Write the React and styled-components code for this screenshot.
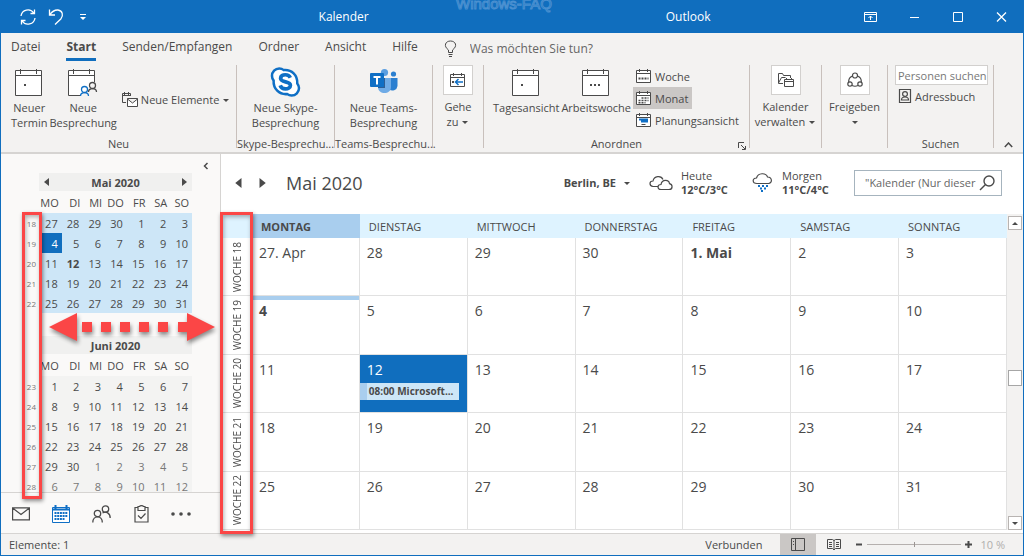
import React from 'react';
import styled, { createGlobalStyle, css } from 'styled-components';

const blue = '#106ebe';
const ink = '#4a4a4a';

const GlobalStyle = createGlobalStyle`
  * {
    box-sizing: border-box;
  }
  body {
    margin: 0;
    font-family: "Open Sans", "Noto Sans", sans-serif;
    font-size: 12px;
    line-height: 15px;
    color: ${ink};
  }
  button, input {
    font: inherit;
    color: inherit;
  }
  button {
    padding: 0;
    border: 0;
    background: none;
  }
  svg {
    display: block;
    flex: none;
  }
`;

const Window = styled.div`
  display: flex;
  flex-direction: column;
  height: 100vh;
  min-height: 556px;
  border: 1px solid ${blue};
  border-top: 0;
  background: #fff;
  overflow: hidden;
`;

/* ---------- title bar ---------- */

const TitleBar = styled.header`
  position: relative;
  display: grid;
  grid-template-columns: 1fr auto 1fr;
  align-items: center;
  height: 33px;
  padding: 0 13px 0 18px;
  background: ${blue};
  color: #fff;
  overflow: hidden;
`;

const QuickAccess = styled.div`
  display: flex;
  align-items: center;
  gap: 11px;
`;

const Titles = styled.div`
  display: flex;
  gap: 297px;
`;

const WindowButtons = styled.div`
  display: flex;
  justify-content: flex-end;
  gap: 20px;
`;

const Watermark = styled.div`
  position: absolute;
  left: 50%;
  top: -8px;
  margin-left: -56px;
  font-family: "Liberation Sans", sans-serif;
  font-size: 15px;
  line-height: 24px;
  color: ${blue};
  -webkit-text-stroke: 1px #4a90d0;
`;

/* ---------- ribbon ---------- */

const Tabs = styled.nav`
  display: flex;
  align-items: center;
  gap: 26px;
  height: 30px;
  padding: 0 10px;
  background: #f3f2f1;
`;

const Tab = styled.button`
  height: 26px;
  line-height: 22px;
  border-bottom: 3px solid transparent;
  ${(p) => p.$active && css`
    font-weight: 700;
    border-color: ${blue};
  `}
`;

const TellMe = styled.label`
  display: flex;
  align-items: center;
  gap: 12px;
  height: 26px;

  input {
    width: 150px;
    padding: 0;
    border: 0;
    background: none;
    outline: 0;
  }
  input::placeholder {
    color: #666;
    opacity: 1;
  }
`;

const Ribbon = styled.div`
  display: flex;
  height: 91px;
  padding: 2px 0 4px;
  background: #f3f2f1;
  border-bottom: 2px solid #d6d4d2;
  font-size: 11px;
`;

const Group = styled.section`
  display: flex;
  flex-direction: column;
  flex: 0 0 ${(p) => p.$width}px;
  min-width: 0;
  border-right: 1px solid #c8c0bc;
`;

const GroupBody = styled.div`
  display: flex;
  flex: 1;
  justify-content: ${(p) => p.$align || 'center'};
  padding-left: ${(p) => p.$pad || 0}px;
  gap: ${(p) => p.$gap || 0}px;
`;

const GroupLabel = styled.div`
  position: relative;
  height: 14px;
  line-height: 20px;
  text-align: center;
  white-space: nowrap;
`;

const Launcher = styled.button`
  position: absolute;
  right: 3px;
  bottom: -2px;
`;

const BigButton = styled.button`
  display: flex;
  flex-direction: column;
  align-items: center;
  padding-top: ${(p) => (p.$boxed ? 0 : 3)}px;
  white-space: nowrap;

  span {
    display: block;
    padding-top: 4px;
  }
`;

const IconBox = styled.i`
  display: grid;
  place-items: center;
  width: 30px;
  height: 30px;
  border: 1px solid #d2d0ce;
  background: #fff;
`;

const SmallButton = styled.button`
  display: flex;
  align-items: center;
  align-self: ${(p) => p.$self || 'flex-start'};
  gap: 3px;
  height: 22px;
  padding: 0 4px 0 3px;
  white-space: nowrap;
  background: ${(p) => (p.$active ? '#cac7c5' : 'none')};
`;

const Stack = styled.div`
  display: flex;
  flex-direction: column;
`;

const PeopleSearch = styled.input`
  width: 93px;
  height: 20px;
  padding: 0 0 0 2px;
  border: 1px solid #d2d0ce;
  background: #fff;
  outline: 0;
  &::placeholder {
    color: #777;
    opacity: 1;
  }
`;

const Collapse = styled.button`
  align-self: flex-end;
  margin: 0 auto;
`;

/* ---------- body ---------- */

const Body = styled.div`
  position: relative;
  display: flex;
  flex: 1;
  min-height: 0;
`;

const Sidebar = styled.aside`
  display: flex;
  flex-direction: column;
  flex: 0 0 219px;
  background: #faf9f8;
`;

const SidebarTop = styled.div`
  display: flex;
  justify-content: flex-end;
  height: 19px;
  padding: 4px 11px 0 0;
`;

const Months = styled.div`
  flex: 1;
  min-height: 0;
  overflow: hidden;
  padding-left: 23px;
`;

const Month = styled.table`
  width: 168px;
  margin-bottom: 23px;
  border-spacing: 0;
  table-layout: fixed;
  font-size: 11px;

  th, td {
    padding: 0 4px 0 0;
    text-align: right;
    font-weight: 400;
  }
  thead th {
    height: 22px;
    padding-right: 3px;
  }
  tbody tr {
    height: 20px;
  }
  tbody th {
    font-size: 8px;
    color: #777;
    padding-right: 4px;
  }
`;

const MonthTitle = styled.caption`
  height: 18px;
  margin-left: 15px;
  background: #f0f0ef;
  font-weight: 700;

  div {
    display: flex;
    align-items: center;
    justify-content: ${(p) => (p.$arrows ? 'space-between' : 'center')};
    height: 18px;
    padding: 0 4px;
  }
`;

const MiniDay = styled.td`
  background: ${(p) => (p.$today ? blue : p.$range ? '#cde6f7' : '#f3f3f2')};
  color: ${(p) => (p.$today ? '#fff' : p.$dim ? '#777' : ink)};
  && {
    font-weight: ${(p) => (p.$bold ? 700 : 400)};
  }
`;

const Modules = styled.nav`
  display: flex;
  align-items: center;
  gap: 20px;
  height: 41px;
  padding: 2px 10px 0;
  border-top: 1px solid #d6d4d2;
`;

const ModuleButton = styled.button`
  display: grid;
  place-items: center;
  width: 20px;
  height: 24px;
`;

const Main = styled.main`
  display: flex;
  flex-direction: column;
  flex: 1;
  min-width: 0;
  border-left: 1px solid #d6d4d2;
`;

const Heading = styled.div`
  display: flex;
  align-items: center;
  height: 60px;
  padding: 0 21px 3px 13px;
`;

const Arrows = styled.div`
  display: flex;
  gap: 13px;
`;

const MonthName = styled.h1`
  margin: 0 auto 0 19px;
  font-size: 18px;
  line-height: 24px;
  font-weight: 400;
`;

const Location = styled.button`
  display: flex;
  align-items: center;
  gap: 7px;
  margin-right: 18px;
  font-size: 11px;
  font-weight: 700;
`;

const Weather = styled.div`
  display: flex;
  align-items: center;
  gap: 8px;
  width: ${(p) => p.$width}px;
  font-size: 11px;
  line-height: 14px;
  white-space: nowrap;

  strong {
    display: block;
  }
`;

const Search = styled.label`
  display: flex;
  align-items: center;
  width: 148px;
  height: 26px;
  padding: 0 6px 0 10px;
  border: 1px solid #a6b4be;

  input {
    flex: 1;
    min-width: 0;
    padding: 0;
    border: 0;
    outline: 0;
    font-size: 11px;
  }
  input::placeholder {
    color: #666;
    opacity: 1;
  }
`;

const GridArea = styled.div`
  display: flex;
  flex: 1;
  min-height: 0;
  padding-bottom: 3px;
`;

const GridWrap = styled.div`
  flex: 1;
  min-width: 0;
`;

const Grid = styled.table`
  width: 100%;
  height: 100%;
  border-spacing: 0;
  table-layout: fixed;

  th, td {
    padding: 0;
    font-weight: 400;
    text-align: left;
  }
`;

const DayHead = styled.th`
  height: 24px;
  background: ${(p) => (p.$today ? '#a9ceee' : '#def3ff')};
  && {
    padding-left: 9px;
    font-size: 11px;
    font-weight: ${(p) => (p.$today ? 700 : 400)};
  }
`;

const WeekHead = styled.th`
  border-bottom: 1px solid #e1e1e1;

  span {
    display: block;
    margin: 0 auto;
    writing-mode: vertical-rl;
    transform: rotate(180deg);
    font-size: 10px;
    line-height: 16px;
    width: 16px;
    white-space: nowrap;
  }
`;

const Day = styled.td`
  vertical-align: top;
  border-right: 1px solid #e1e1e1;
  border-bottom: 1px solid #e1e1e1;
  font-size: 14px;
  line-height: 18px;
  ${(p) => p.$today && css`
    box-shadow: inset 0 4px #a9ceee;
  `}
  ${(p) => p.$selected && css`
    background: ${blue};
    color: #fff;
  `}
  && {
    font-weight: ${(p) => (p.$bold ? 700 : 400)};
  }
`;

const DayNumber = styled.div`
  padding: 6px 0 0 7px;
`;

const Event = styled.button`
  display: block;
  width: 99px;
  height: 17px;
  margin-top: 4px;
  padding-left: 2px;
  border-left: 7px solid #a9ceee;
  background: #cde6f7;
  color: ${ink};
  font-size: 10px;
  font-weight: 700;
  line-height: 15px;
  text-align: left;
  white-space: nowrap;
`;

const Scrollbar = styled.div`
  display: flex;
  flex-direction: column;
  width: 16px;
  padding: 2px 1px 0;
  background: #f3f2f1;
`;

const ScrollButton = styled.button`
  display: grid;
  place-items: center;
  height: 14px;
  border: 1px solid #b8b4b2;
  background: #fff;
`;

const Gap = styled.div`
  flex: ${(p) => p.$grow};
`;

const Thumb = styled.div`
  height: 16px;
  border: 1px solid #a6a6a6;
  background: #fff;
`;

/* ---------- highlights over the week numbers ---------- */

const Frame = styled.div`
  position: absolute;
  top: ${(p) => p.$top}px;
  bottom: ${(p) => p.$bottom}px;
  left: ${(p) => p.$left}px;
  width: ${(p) => p.$width}px;
  border: 3px solid #fb4646;
  box-shadow: 1px 2px 4px rgba(0, 0, 0, 0.45), inset 1px 2px 4px rgba(0, 0, 0, 0.3);
  pointer-events: none;
`;

const DoubleArrow = styled.svg`
  position: absolute;
  left: 47px;
  top: 157px;
  filter: drop-shadow(1px 3px 2px rgba(0, 0, 0, 0.45));
  pointer-events: none;
`;

/* ---------- status bar ---------- */

const Status = styled.footer`
  display: flex;
  align-items: center;
  height: 22px;
  padding: 0 18px 0 8px;
  background: #f3f2f1;
  border-top: 1px solid #d6d4d2;
  font-size: 11px;
`;

const Connected = styled.span`
  margin: 0 18px 0 auto;
`;

const ViewButton = styled.button`
  display: grid;
  place-items: center;
  width: 36px;
  height: 21px;
  background: ${(p) => (p.$active ? '#cac7c5' : 'none')};
`;

const Zoom = styled.div`
  display: flex;
  align-items: center;
  gap: 4px;
  margin: 0 8px 0 4px;

  input {
    appearance: none;
    width: 94px;
    height: 15px;
    margin: 0;
    background: linear-gradient(#b5b0ae, #b5b0ae) center / 100% 1px no-repeat;
  }
  input::-webkit-slider-thumb {
    appearance: none;
    width: 1px;
    height: 5px;
    background: #9a9492;
  }
`;

const Percent = styled.span`
  color: #b0aeac;
`;

/* ---------- icons ---------- */

const stroke = { fill: 'none', stroke: 'currentColor' };

const Triangle = ({ dir, size = 8 }) => {
  const d = {
    left: 'M6 0v8L1 4z',
    right: 'M2 0v8l5-4z',
    up: 'M1 6h6L4 3z',
    down: 'M1 3h6L4 6z',
  }[dir];
  return (
    <svg width={size} height={size} viewBox="0 0 8 8" fill="currentColor">
      <path d={d} />
    </svg>
  );
};

const CalendarIcon = ({ children }) => (
  <svg width="28" height="28" viewBox="0 0 28 28" {...stroke}>
    <path d="M.5 2.500h26v25h-26z" fill="#fff" />
    <path d="M.5 7.500h26M5.500 1v5M21.500 1v5" />
    {children}
  </svg>
);

const Dots = ({ xs, y }) => (
  <g stroke="none" fill={ink}>
    {xs.map((x) => <rect key={x} x={x} y={y} width="2" height="2" />)}
  </g>
);

const SmallCalendar = ({ children }) => (
  <svg width="16" height="16" viewBox="0 0 16 16" {...stroke}>
    <path d="M.5 2.500h14v12H.5z" fill="#fff" />
    <path d="M.5 5.500h14M3.500 1v3M11.500 1v3" />
    {children}
  </svg>
);

const SkypeIcon = () => (
  <svg width="31" height="28" viewBox="0 1 31 29" overflow="visible">
    <path
      d="M9 1.500c2 0 3.500.7 4.800 1.700C22 2.500 28 8.500 27.700 17c1 1.300 1.800 2.900 1.800 4.700 0 4.300-3.400 7.800-7.700 7.800-1.800 0-3.300-.6-4.600-1.500C9 28.700 2.700 22.500 3.200 14 2.200 12.600 1.500 11 1.500 9.200 1.500 5 4.800 1.500 9 1.500z"
      fill="#fff" stroke="#0f6fc5" strokeWidth="2.600"
    />
    <path
      d="M20.500 11c-1-2.200-3-3-5.200-3-2.600 0-4.900 1.200-4.900 3.600 0 5 10.200 2.500 10.200 7.300 0 2.400-2.400 3.700-5.100 3.700-2.600 0-4.700-1.100-5.500-3.600"
      fill="none" stroke="#0f6fc5" strokeWidth="3.800"
    />
  </svg>
);

const TeamsIcon = () => (
  <svg width="28" height="28" viewBox="0 0 28 28">
    <circle cx="23.500" cy="6" r="2.600" fill="#2b7fd0" />
    <circle cx="14.500" cy="4.500" r="3.600" fill="#5a9ee0" />
    <path d="M19 10h8.500v8a5 5 0 0 1-8.500 3z" fill="#2b7fd0" />
    <path d="M8 10h13v9c0 8-13 8-13 0z" fill="#6fabe6" />
    <path d="M8 10h7v10H8z" fill="#2d5f96" />
    <rect x="0" y="5" width="14" height="14" rx="1" fill="#0f6fc5" />
    <path d="M3.500 9h7M7 9v7.500" stroke="#fff" strokeWidth="2" />
  </svg>
);

const Person = ({ x, y, color }) => (
  <g transform={`translate(${x} ${y})`} stroke={color} strokeWidth="1.300">
    <circle cx="4.500" cy="3.500" r="3" />
    <path d="M.5 10c0-4.500 8-4.500 8 0" />
  </g>
);

/* ---------- data ---------- */

const weekdays = ['MO', 'DI', 'MI', 'DO', 'FR', 'SA', 'SO'];

const may = [
  [18, [27, 28, 29, 30, 1, 2, 3]],
  [19, [4, 5, 6, 7, 8, 9, 10]],
  [20, [11, 12, 13, 14, 15, 16, 17]],
  [21, [18, 19, 20, 21, 22, 23, 24]],
  [22, [25, 26, 27, 28, 29, 30, 31]],
];

const june = [
  [23, [1, 2, 3, 4, 5, 6, 7]],
  [24, [8, 9, 10, 11, 12, 13, 14]],
  [25, [15, 16, 17, 18, 19, 20, 21]],
  [26, [22, 23, 24, 25, 26, 27, 28]],
  [27, [29, 30, 1, 2, 3, 4, 5]],
  [28, [6, 7, 8, 9, 10, 11, 12]],
];

const days = ['MONTAG', 'DIENSTAG', 'MITTWOCH', 'DONNERSTAG', 'FREITAG', 'SAMSTAG', 'SONNTAG'];

const dayLabel = (week, day) => {
  if (week === 18 && day === 27) return '27. Apr';
  if (week === 18 && day === 1) return '1. Mai';
  return day;
};

/* ---------- parts ---------- */

const MiniMonth = ({ title, weeks, current }) => (
  <Month>
    <MonthTitle $arrows={current}>
      <div>
        {current && <button aria-label="Vorheriger Monat"><Triangle dir="left" /></button>}
        <span>{title}</span>
        {current && <button aria-label="Nächster Monat"><Triangle dir="right" /></button>}
      </div>
    </MonthTitle>
    <colgroup>
      <col style={{ width: 16 }} />
    </colgroup>
    <thead>
      <tr>
        <th />
        {weekdays.map((d) => <th key={d}>{d}</th>)}
      </tr>
    </thead>
    <tbody>
      {weeks.map(([week, list]) => (
        <tr key={week}>
          <th>{week}</th>
          {list.map((d) => (
            <MiniDay
              key={d}
              $range={current}
              $today={current && d === 4}
              $bold={current && d === 12}
              $dim={!current && ((week === 27 && d < 10) || week === 28)}
            >
              {d}
            </MiniDay>
          ))}
        </tr>
      ))}
    </tbody>
  </Month>
);

const TopBar = () => (
  <TitleBar>
    <Watermark>Windows-FAQ</Watermark>
    <QuickAccess>
      <button aria-label="Senden/Empfangen">
        <svg width="18" height="18" viewBox="0 0 18 18" {...stroke} strokeWidth="1.300">
          <path d="M2 8a7 7 0 0 1 12.800-3M16 10A7 7 0 0 1 3.200 13M15.500 1.500v4h-4M2.500 16.500v-4h4" />
        </svg>
      </button>
      <button aria-label="Rückgängig">
        <svg width="16" height="18" viewBox="0 0 16 18" {...stroke} strokeWidth="1.300">
          <path d="M1.500 1.500v5.500h5.500M1.800 6.800C4 3.500 7 1.800 10 2c4.500.6 5.800 5.500 2.800 9L7 16.500" />
        </svg>
      </button>
      <button aria-label="Anpassen">
        <svg width="18" height="8" viewBox="0 0 18 8" fill="currentColor">
          <path d="M5 1h6v1H5zM5 4h6L8 7z" />
        </svg>
      </button>
    </QuickAccess>
    <Titles>
      <span>Kalender</span>
      <span>Outlook</span>
    </Titles>
    <WindowButtons>
      <button aria-label="Menüband-Anzeigeoptionen">
        <svg width="24" height="12" viewBox="0 0 24 12" {...stroke}>
          <path d="M.5 1.500h12v9H.5zM.5 3.500h12M6.500 9V5M4.500 7l2-2 2 2" />
        </svg>
      </button>
      <button aria-label="Minimieren">
        <svg width="24" height="12" viewBox="0 0 24 12" {...stroke}><path d="M2 6.500h9" /></svg>
      </button>
      <button aria-label="Maximieren">
        <svg width="24" height="12" viewBox="0 0 24 12" {...stroke}><path d="M1.500 1.500h9v9h-9z" /></svg>
      </button>
      <button aria-label="Schließen">
        <svg width="14" height="12" viewBox="0 0 14 12" {...stroke} strokeWidth="1.300"><path d="M1 1.500l9 9M10 1.500l-9 9" /></svg>
      </button>
    </WindowButtons>
  </TitleBar>
);

const TabRow = () => (
  <Tabs>
    <Tab>Datei</Tab>
    <Tab $active>Start</Tab>
    <Tab>Senden/Empfangen</Tab>
    <Tab>Ordner</Tab>
    <Tab>Ansicht</Tab>
    <Tab>Hilfe</Tab>
    <TellMe>
      <svg width="14" height="17" viewBox="0 0 14 17" {...stroke}>
        <path d="M4.500 12.500v-2.500C-1 6 1.500 1 6.500 1s7.500 5 2 9v2.500zM4.500 14.500h4M5 16.500h3" />
      </svg>
      <input aria-label="Was möchten Sie tun?" placeholder="Was möchten Sie tun?" />
    </TellMe>
  </Tabs>
);

const ArrowSlot = styled.i`
  display: inline-block;
  svg {
    display: inline;
  }
`;

const InlineArrow = () => (
  <ArrowSlot><Triangle dir="down" /></ArrowSlot>
);

const RibbonBar = () => (
  <Ribbon>
    <Group $width={236}>
      <GroupBody $align="flex-start" $pad={10} $gap={2}>
        <BigButton>
          <CalendarIcon><Dots xs={[9]} y={16} /></CalendarIcon>
          <span>Neuer<br />Termin</span>
        </BigButton>
        <BigButton>
          <svg width="30" height="28" viewBox="0 0 30 28" {...stroke}>
            <path d="M12 27.500H.5v-25h26V14" fill="#fff" />
            <path d="M.5 7.500h26M5.500 1v5M21.500 1v5" />
            <Person x={20} y={14} color={ink} />
            <Person x={12} y={18} color="#0f6fc5" />
          </svg>
          <span>Neue<br />Besprechung</span>
        </BigButton>
        <SmallButton $self="center">
          <svg width="16" height="16" viewBox="0 0 16 16" {...stroke}>
            <path d="M4 10.500H.5v-9h8V4M.5 3.500h8M2.500 0v3M6.500 0v3" />
            <path d="M5.500 6.500h10v8h-10zM5.500 7l5 4 5-4" fill="#fff" />
          </svg>
          Neue Elemente
          <Triangle dir="down" />
        </SmallButton>
      </GroupBody>
      <GroupLabel>Neu</GroupLabel>
    </Group>
    <Group $width={98}>
      <GroupBody>
        <BigButton>
          <SkypeIcon />
          <span>Neue Skype-<br />Besprechung</span>
        </BigButton>
      </GroupBody>
      <GroupLabel>Skype-Besprechu...</GroupLabel>
    </Group>
    <Group $width={98}>
      <GroupBody>
        <BigButton>
          <TeamsIcon />
          <span>Neue Teams-<br />Besprechung</span>
        </BigButton>
      </GroupBody>
      <GroupLabel>Teams-Besprechu...</GroupLabel>
    </Group>
    <Group $width={51}>
      <GroupBody>
        <BigButton $boxed>
          <IconBox>
            <SmallCalendar>
              <path d="M13 10H5.500M8.500 7l-3 3 3 3" stroke="#0f6fc5" strokeWidth="1.500" />
              <Dots xs={[2]} y={9} />
            </SmallCalendar>
          </IconBox>
          <span>Gehe<br />zu <InlineArrow /></span>
        </BigButton>
      </GroupBody>
      <GroupLabel />
    </Group>
    <Group $width={266}>
      <GroupBody $align="flex-start" $pad={9} $gap={2}>
        <BigButton>
          <CalendarIcon><Dots xs={[9]} y={16} /></CalendarIcon>
          <span>Tagesansicht</span>
        </BigButton>
        <BigButton>
          <CalendarIcon><Dots xs={[8, 12, 16]} y={16} /></CalendarIcon>
          <span>Arbeitswoche</span>
        </BigButton>
        <Stack>
          <SmallButton>
            <SmallCalendar><path d="M2.500 10.500h10" strokeWidth="2" strokeDasharray="2 1" /></SmallCalendar>
            Woche
          </SmallButton>
          <SmallButton $active>
            <SmallCalendar>
              <path d="M5.500 8h7M2.500 10.500h10M2.500 12.800h7" strokeWidth="1.500" strokeDasharray="2 1" />
            </SmallCalendar>
            Monat
          </SmallButton>
          <SmallButton>
            <SmallCalendar>
              <path d="M3 7.500h9M5 9.500h7" stroke="#0f6fc5" strokeWidth="2" />
              <path d="M5.500 12.500h4" />
            </SmallCalendar>
            Planungsansicht
          </SmallButton>
        </Stack>
      </GroupBody>
      <GroupLabel>
        Anordnen
        <Launcher aria-label="Anordnen: Optionen">
          <svg width="8" height="8" viewBox="0 0 8 8" {...stroke}>
            <path d="M.5 6V.5H6M3 3l4 4M7.500 4v3.500H4" />
          </svg>
        </Launcher>
      </GroupLabel>
    </Group>
    <Group $width={72}>
      <GroupBody>
        <BigButton $boxed>
          <IconBox>
            <svg width="16" height="16" viewBox="0 0 16 16" {...stroke}>
              <path d="M5 11.500H.5V1.500h4l1 2h7V6M.5 11l3-5.500h4" />
              <path d="M6.500 7.500h9v7h-9zM6.500 9.500h9M8.500 6v2M13.500 6v2" fill="#fff" />
            </svg>
          </IconBox>
          <span>Kalender<br />verwalten <InlineArrow /></span>
        </BigButton>
      </GroupBody>
      <GroupLabel />
    </Group>
    <Group $width={66}>
      <GroupBody>
        <BigButton $boxed>
          <IconBox>
            <svg width="16" height="16" viewBox="0 0 16 16" {...stroke} strokeWidth="1.200">
              <circle cx="8" cy="3.500" r="2.500" />
              <circle cx="3" cy="12" r="2.200" />
              <circle cx="13" cy="12" r="2.200" />
              <path d="M5.500 4C3 5 1.500 7 1.700 10M10.500 4c2.500 1 4 3 3.800 6M5 13.500c2 1 4 1 6 0" />
            </svg>
          </IconBox>
          <span>Freigeben<br /><InlineArrow /></span>
        </BigButton>
      </GroupBody>
      <GroupLabel />
    </Group>
    <Group $width={106}>
      <GroupBody $align="flex-start" $pad={7}>
        <Stack>
          <PeopleSearch aria-label="Personen suchen" placeholder="Personen suchen" />
          <SmallButton>
            <svg width="14" height="16" viewBox="0 0 14 16" {...stroke} strokeWidth="1.200">
              <path d="M1.500 1.500h11v13h-11zM3.500 12c0-4 7-4 7 0zM1 4.500h1M1 11.500h1" />
              <circle cx="7" cy="6" r="2.400" />
            </svg>
            Adressbuch
          </SmallButton>
        </Stack>
      </GroupBody>
      <GroupLabel>Suchen</GroupLabel>
    </Group>
    <Collapse aria-label="Menüband reduzieren">
      <svg width="9" height="6" viewBox="0 0 9 6" {...stroke} strokeWidth="1.500"><path d="M.8 5l3.700-4 3.700 4" /></svg>
    </Collapse>
  </Ribbon>
);

const FolderPane = () => (
  <Sidebar>
    <SidebarTop>
      <button aria-label="Ordnerbereich reduzieren">
        <svg width="6" height="8" viewBox="0 0 6 8" {...stroke} strokeWidth="1.500"><path d="M4.500 1L1.500 4l3 3" /></svg>
      </button>
    </SidebarTop>
    <Months>
      <MiniMonth title="Mai 2020" weeks={may} current />
      <MiniMonth title="Juni 2020" weeks={june} />
    </Months>
    <Modules>
      <ModuleButton aria-label="E-Mail">
        <svg width="18" height="14" viewBox="0 0 18 14" {...stroke} strokeWidth="1.200">
          <path d="M.6.8h16.800v12H.6zM.6 1L9 7.500 17.400 1" />
        </svg>
      </ModuleButton>
      <ModuleButton aria-label="Kalender">
        <svg width="18" height="18" viewBox="0 0 18 18" fill="none" stroke="#0f6fc5">
          <path d="M.5 2.500h17v15H.5z" fill="#fff" />
          <path d="M.5 4.500h17M3.500 0v4M14.500 0v4" strokeWidth="2" />
          <path d="M2.500 8h13M2.500 11h13M2.500 14h10" strokeWidth="2" strokeDasharray="2 .7" />
        </svg>
      </ModuleButton>
      <ModuleButton aria-label="Personen">
        <svg width="19" height="18" viewBox="0 0 19 18" {...stroke} strokeWidth="1.300">
          <circle cx="5.500" cy="8.500" r="3.200" />
          <path d="M.8 17.500c0-7.500 9.500-7.500 9.500 0" />
          <circle cx="13.500" cy="4" r="3.200" />
          <path d="M10.500 8c3.500-2 7.700 0 7.700 5" />
        </svg>
      </ModuleButton>
      <ModuleButton aria-label="Aufgaben">
        <svg width="15" height="18" viewBox="0 0 15 18" {...stroke} strokeWidth="1.200">
          <path d="M4 2.500H1v14.500h13V2.500h-3M4 1.500h1.500C6 .3 9 .3 9.500 1.500H11v4H4zM4 10.500l3 3 4.500-5" />
        </svg>
      </ModuleButton>
      <ModuleButton aria-label="Weitere">
        <svg width="20" height="4" viewBox="0 0 20 4" fill={ink}>
          <circle cx="2" cy="2" r="1.800" /><circle cx="10" cy="2" r="1.800" /><circle cx="18" cy="2" r="1.800" />
        </svg>
      </ModuleButton>
    </Modules>
  </Sidebar>
);

const CalendarHeading = () => (
  <Heading>
    <Arrows>
      <button aria-label="Zurück"><Triangle dir="left" size={10} /></button>
      <button aria-label="Weiter"><Triangle dir="right" size={10} /></button>
    </Arrows>
    <MonthName>Mai 2020</MonthName>
    <Location>Berlin, BE <Triangle dir="down" /></Location>
    <Weather $width={103}>
      <svg width="24" height="16" viewBox="0 0 24 16" {...stroke} strokeWidth="1.200">
        <path d="M9 11.500H4C0 11 0 6 4 6 5 1 12 0 14 4.500" />
        <path d="M12 14.500c-4 0-4-5 0-5 1-5.500 8-5 8.500-.8 3.500.8 3.500 5.800-.5 5.800z" />
      </svg>
      <div>Heute<strong>12°C/3°C</strong></div>
    </Weather>
    <Weather $width={102}>
      <svg width="22" height="20" viewBox="0 0 22 20" {...stroke} strokeWidth="1.200">
        <path d="M5 10.500C0 10.500 0 5 4.500 5 6-.5 14-.5 15.500 4c5 0 5 6.500 1 6.500z" />
        <path d="M6 13h11M8 15.500h8M9 18h4" stroke="#0f6fc5" strokeWidth="2" strokeDasharray="2 2" />
      </svg>
      <div>Morgen<strong>11°C/4°C</strong></div>
    </Weather>
    <Search>
      <input aria-label="Suchen" placeholder={'"Kalender (Nur dieser'} />
      <svg width="16" height="16" viewBox="0 0 16 16" {...stroke} strokeWidth="1.400">
        <circle cx="10" cy="6" r="5" />
        <path d="M6.500 9.500L1 15" />
      </svg>
    </Search>
  </Heading>
);

const MonthGrid = () => (
  <Grid>
    <colgroup>
      <col style={{ width: 31 }} />
    </colgroup>
    <thead>
      <tr>
        <DayHead />
        {days.map((d, i) => <DayHead key={d} $today={i === 0}>{d}</DayHead>)}
      </tr>
    </thead>
    <tbody>
      {may.map(([week, list]) => (
        <tr key={week}>
          <WeekHead><span>WOCHE {week}</span></WeekHead>
          {list.map((d) => (
            <Day key={d} $today={d === 4} $selected={d === 12} $bold={d === 4 || d === 1}>
              <DayNumber>{dayLabel(week, d)}</DayNumber>
              {d === 12 && <Event>08:00 Microsoft...</Event>}
            </Day>
          ))}
        </tr>
      ))}
    </tbody>
  </Grid>
);

const Highlights = () => (
  <>
    <Frame $top={58} $bottom={34} $left={21} $width={20} />
    <Frame $top={58} $bottom={-1} $left={219} $width={33} />
    <DoubleArrow width="168" height="32" viewBox="0 0 168 32" fill="#fb4646">
      <path d="M1 16L29 2v28zM167 16L139 2v9h-9v10h9v9z" />
      <path d="M34 11h10v10H34zM53 11h10v10H53zM72 11h10v10H72zM91 11h10v10H91zM110 11h10v10h-10z" />
    </DoubleArrow>
  </>
);

const StatusBar = () => (
  <Status>
    Elemente: 1
    <Connected>Verbunden</Connected>
    <ViewButton $active aria-label="Normal">
      <svg width="14" height="13" viewBox="0 0 14 13" {...stroke}><path d="M.5.5h13v12H.5zM4.500.5v12M2 3.500h1M2 6.500h1" /></svg>
    </ViewButton>
    <ViewButton aria-label="Lesen">
      <svg width="14" height="13" viewBox="0 0 14 13" {...stroke}>
        <path d="M.5 1.500h5l1.500 1 1.500-1h5v9h-5L7 12l-1.500-1.500h-5zM7 2v10M2 4.500h3M2 6.500h3M2 8.500h3M9 4.500h3M9 6.500h3M9 8.500h3" />
      </svg>
    </ViewButton>
    <Zoom>
      <button aria-label="Verkleinern">
        <svg width="7" height="7" viewBox="0 0 7 7" {...stroke} strokeWidth="2"><path d="M0 3.500h6" /></svg>
      </button>
      <input type="range" aria-label="Zoom" defaultValue="50" />
      <button aria-label="Vergrößern">
        <svg width="7" height="7" viewBox="0 0 7 7" {...stroke} strokeWidth="2"><path d="M0 3.500h7M3.500 0v7" /></svg>
      </button>
    </Zoom>
    <Percent>10 %</Percent>
  </Status>
);

const App = () => {
  return (
    <Window>
      <GlobalStyle />
      <TopBar />
      <TabRow />
      <RibbonBar />
      <Body>
        <FolderPane />
        <Main>
          <CalendarHeading />
          <GridArea>
            <GridWrap>
              <MonthGrid />
            </GridWrap>
            <Scrollbar>
              <ScrollButton aria-label="Nach oben"><Triangle dir="up" /></ScrollButton>
              <Gap $grow={14} />
              <Thumb />
              <Gap $grow={13} />
              <ScrollButton aria-label="Nach unten"><Triangle dir="down" /></ScrollButton>
            </Scrollbar>
          </GridArea>
        </Main>
        <Highlights />
      </Body>
      <StatusBar />
    </Window>
  );
};

export default App;
